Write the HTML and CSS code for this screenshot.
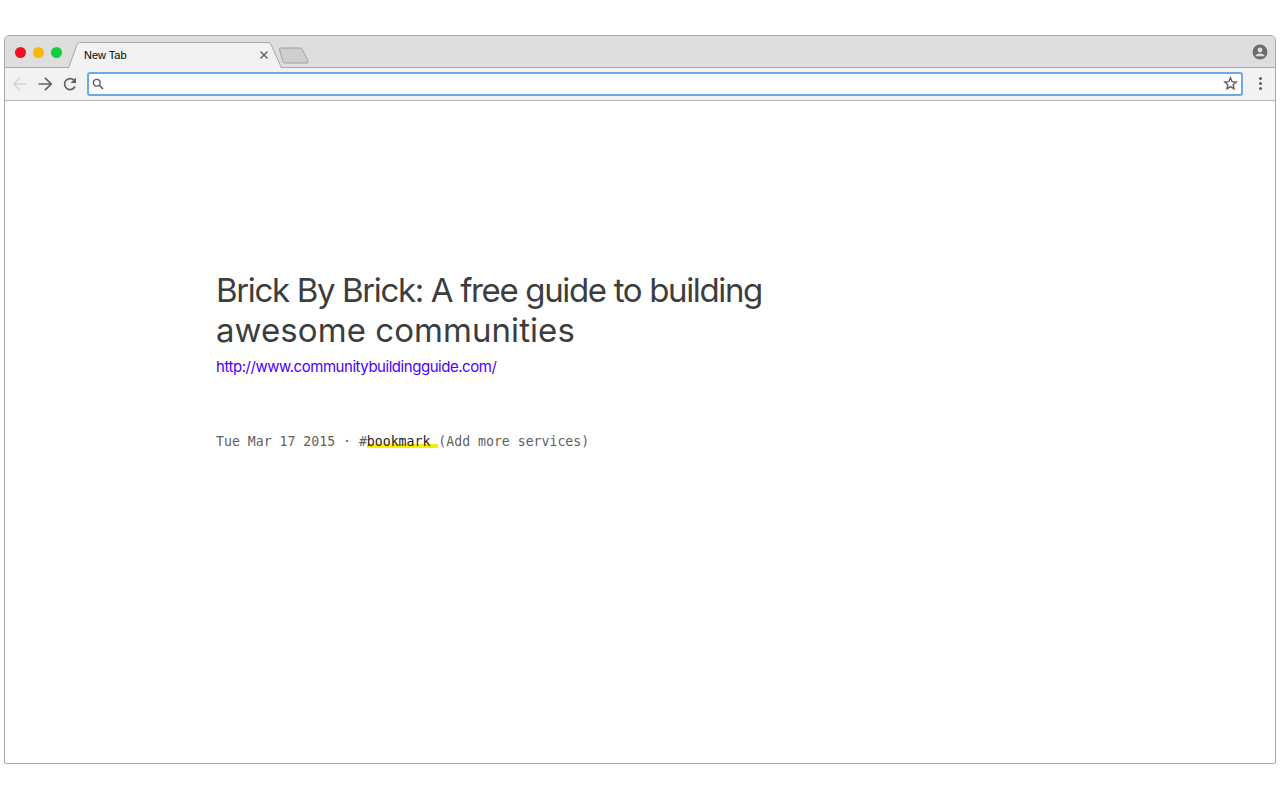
FILE: index.html
```html
<!DOCTYPE html>
<html lang="en">
<head>
  <meta charset="UTF-8">
  <title>New Tab</title>
  <link rel="stylesheet" href="styles.css">
</head>
<body>
  <div class="window">
    <div class="tabstrip">
      <div class="lights">
        <span class="light red"></span>
        <span class="light yellow"></span>
        <span class="light green"></span>
      </div>
      <div class="tab">
        <svg class="tab-shape" width="214" height="26" viewBox="0 0 214 26">
          <path d="M0.5 26 L9 2.5 Q9.5 0.5 11.5 0.5 L200 0.5 Q202 0.5 203 2.5 L213.5 26" fill="#f2f2f2" stroke="#a6a6a6" stroke-width="1"/>
        </svg>
        <span class="tab-title">New Tab</span>
        <svg class="tab-close" width="10" height="10" viewBox="0 0 10 10">
          <path d="M1.5 1.5 L8.5 8.5 M8.5 1.5 L1.5 8.5" stroke="#5a5a5a" stroke-width="1.3"/>
        </svg>
      </div>
      <svg class="new-tab" width="32" height="18" viewBox="0 0 32 18">
        <path d="M1.5 2.5 Q1 1 3 1 L22 1 Q23.5 1 24 2 L30 14 Q30.5 16 29 16 L7 16 Q5.5 16 5 15 Z" fill="#cfcfcf" stroke="#a0a0a0"/>
      </svg>
      <svg class="profile" width="16" height="16" viewBox="0 0 16 16">
        <circle cx="8" cy="8" r="7.5" fill="#6a6e73"/>
        <circle cx="8" cy="6" r="2.4" fill="#e0e0e0"/>
        <path d="M3.5 11.5 Q4.5 9.4 8 9.4 Q11.5 9.4 12.5 11.5 L12.5 12.3 L3.5 12.3 Z" fill="#e0e0e0"/>
      </svg>
    </div>

    <div class="toolbar">
      <svg class="nav-icon" width="16" height="16" viewBox="0 0 16 16">
        <path d="M14.5 8 H2 M8 1.8 L1.8 8 L8 14.2" fill="none" stroke="#d6d6d6" stroke-width="1.7"/>
      </svg>
      <svg class="nav-icon" width="16" height="16" viewBox="0 0 16 16">
        <path d="M1.5 8 H14 M8 1.8 L14.2 8 L8 14.2" fill="none" stroke="#5f6368" stroke-width="1.7"/>
      </svg>
      <svg class="nav-icon" width="16" height="16" viewBox="0 0 16 16">
        <path d="M13 10.5 A5.5 5.5 0 1 1 12 4.2" fill="none" stroke="#5f6368" stroke-width="1.7"/>
        <path d="M14 1.5 V7 H8.5 Z" fill="#5f6368"/>
      </svg>
      <div class="omnibox">
        <svg width="12" height="12" viewBox="0 0 12 12">
          <circle cx="4.7" cy="4.7" r="3.4" fill="none" stroke="#5a5a5a" stroke-width="1.3"/>
          <path d="M7.3 7.3 L11 11" stroke="#5a5a5a" stroke-width="1.5"/>
        </svg>
        <svg class="star" width="15" height="15" viewBox="0 0 15 15">
          <path d="M7.5 1.8 L9.1 5.7 L13.3 6 L10.1 8.7 L11.1 12.8 L7.5 10.6 L3.9 12.8 L4.9 8.7 L1.7 6 L5.9 5.7 Z" fill="none" stroke="#5a5a5a" stroke-width="1.3"/>
        </svg>
      </div>
      <div class="menu-dots">
        <span></span><span></span><span></span>
      </div>
    </div>

    <main class="page">
      <h1><span class="line-one">Brick By Brick: A free guide to building</span> <span class="line-two">awesome communities</span></h1>
      <a class="link" href="#">http://www.communitybuildingguide.com/</a>
      <p class="meta">Tue Mar 17 2015 · #<span class="tag">bookmark </span> (Add more services)</p>
    </main>
  </div>
</body>
</html>
```

FILE: styles.css
```css
/* Browser frame */
html, body {
  margin: 0;
  height: 100%;
  background: #fff;
}

body {
  padding: 35px 4px 36px;
  box-sizing: border-box;
}

.window {
  height: 100%;
  box-sizing: border-box;
  border: 1px solid #a8a8a8;
  border-radius: 5px 5px 2px 2px;
  overflow: hidden;
  display: flex;
  flex-direction: column;
  background: #fff;
}

.tabstrip {
  height: 32px;
  flex: none;
  display: flex;
  align-items: flex-end;
  background: #dedede;
  border-bottom: 1px solid #a9a9a9;
  box-sizing: border-box;
  padding-left: 10px;
  padding-right: 7px;
}

.lights {
  display: flex;
  gap: 7px;
  align-self: flex-start;
  margin-top: 11px;
}

.light {
  width: 11px;
  height: 11px;
  border-radius: 50%;
}

.red { background: #fc0d22; }
.yellow { background: #fdb500; }
.green { background: #0ecf3c; }

.tab {
  position: relative;
  width: 214px;
  height: 26px;
  margin-left: 6px;
  margin-bottom: -1px;
  flex: none;
  display: flex;
  align-items: center;
  justify-content: space-between;
  padding: 0 13px 0 16px;
  box-sizing: border-box;
}

.tab-shape {
  position: absolute;
  left: 0;
  top: 0;
}

.tab-title {
  position: relative;
  font: 11px "Liberation Sans", Arial, sans-serif;
  color: #000;
}

.tab-close {
  position: relative;
}

.new-tab {
  margin-left: -4px;
  margin-bottom: 2px;
  flex: none;
}

.profile {
  margin-left: auto;
  margin-bottom: 7px;
}

.toolbar {
  height: 33px;
  flex: none;
  display: flex;
  align-items: center;
  background: #f2f2f2;
  border-bottom: 1px solid #b5b5b5;
  box-sizing: border-box;
  padding: 0 7px 1px 7px;
  gap: 9px;
}

.nav-icon {
  flex: none;
}

.omnibox {
  flex: 1;
  height: 24px;
  display: flex;
  align-items: center;
  justify-content: space-between;
  box-sizing: border-box;
  background: #fff;
  border: 2px solid #6ba9ec;
  border-radius: 3px;
  padding: 0 3px 0 3px;
}

.menu-dots {
  width: 16px;
  display: flex;
  flex-direction: column;
  align-items: center;
  gap: 2px;
}

.menu-dots span {
  width: 3px;
  height: 3px;
  border-radius: 50%;
  background: #5f6368;
}

/* Page content */
.page {
  flex: 1;
  padding: 169px 0 0 211px;
}

h1 {
  width: 570px;
  margin: 0;
  font: 400 33px/40px Inter, "Open Sans", sans-serif;
  color: #3d3d3d;
}

.line-one {
  display: block;
  letter-spacing: -1.35px;
}

.line-two {
  display: block;
  letter-spacing: 0.06px;
}

.link {
  display: block;
  margin-top: 7px;
  font: 15px/20px Inter, "Open Sans", sans-serif;
  letter-spacing: -0.46px;
  color: #4a00ff;
  text-decoration: none;
}

.meta {
  margin: 55px 0 0;
  font: 13.2px/20px "DejaVu Sans Mono", monospace;
  color: #5f5f5f;
}

.tag {
  color: #222;
  background: linear-gradient(transparent 10px, #f7ef00 10px, #f7ef00 14px, transparent 14px);
}
```
